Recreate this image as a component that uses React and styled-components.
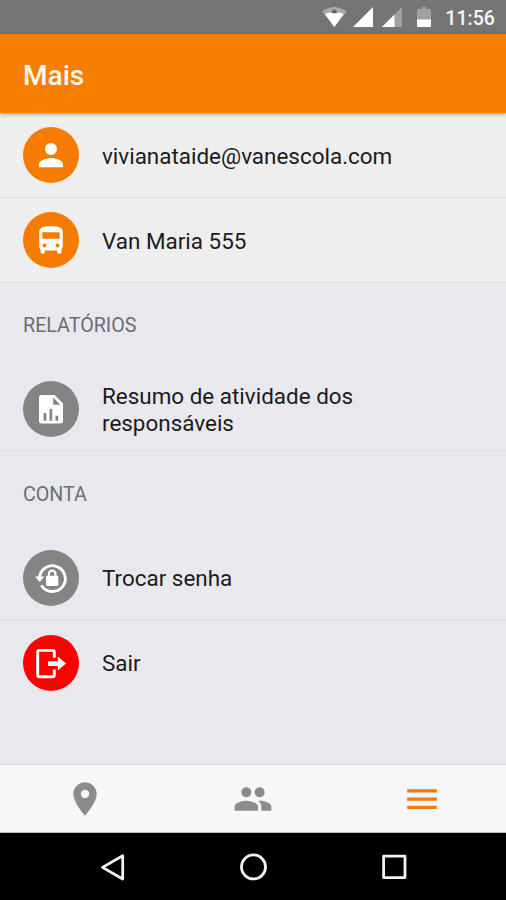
import React from 'react';
import styled, { createGlobalStyle } from 'styled-components';

const GlobalStyle = createGlobalStyle`
  * { box-sizing: border-box; }
  body { margin: 0; }
`;

const Screen = styled.div`
  width: 506px;
  height: 900px;
  overflow: hidden;
  display: flex;
  flex-direction: column;
  background: #e9e8ee;
  font-family: Roboto, sans-serif;
`;

const StatusBar = styled.header`
  height: 34px;
  flex: none;
  padding: 0 11px 0 0;
  display: flex;
  align-items: center;
  justify-content: flex-end;
  background: #757575;
`;

const StatusIcons = styled.svg`
  width: 112px;
  height: 22px;
  margin-right: 11px;
`;

const Clock = styled.span`
  color: #f7f7f7;
  font-size: 19.6px;
  font-weight: 500;
  line-height: 24px;
  margin-top: 3px;
`;

const AppBar = styled.div`
  height: 78.5px;
  flex: none;
  padding: 5px 23px 0;
  display: flex;
  align-items: center;
  background: #f77f00;
  box-shadow: 0 1px 4px rgba(0, 0, 0, 0.4);
  z-index: 1;
`;

const Title = styled.h1`
  margin: 0;
  color: #fff8f0;
  font-size: 28.1px;
  line-height: 34px;
  font-weight: 500;
`;

const Content = styled.main`
  flex: 1;
  min-height: 0;
  padding-top: 1px;
`;

const Row = styled.div`
  height: 84.5px;
  padding: 0 23px;
  display: flex;
  align-items: center;
  gap: 23px;
  background: ${(p) => (p.$light ? '#eeeeee' : 'transparent')};
  border-bottom: ${(p) => (p.$last ? '0' : '1px')} solid #e0e0e4;
`;

const Badge = styled.span`
  width: 56px;
  height: 56px;
  flex: none;
  border-radius: 50%;
  background: ${(p) => p.$color};

  svg { display: block; width: 56px; height: 56px; }
`;

const Label = styled.span`
  max-width: 300px;
  padding-top: 2px;
  color: #1b1b1e;
  font-size: 22.44px;
  line-height: 26.4px;
`;

const SectionTitle = styled.h2`
  height: 84.4px;
  margin: 0;
  padding: 2px 23px 0;
  display: flex;
  align-items: center;
  color: #6d6d72;
  font-size: 19.7px;
  font-weight: 400;
`;

const TabBar = styled.nav`
  height: 69px;
  flex: none;
  display: grid;
  grid-template-columns: repeat(3, 1fr);
  background: #f7f7f7;
  border-top: 1.4px solid #d6d6da;
  border-bottom: 1px solid #bdbdbd;
`;

const Tab = styled.button`
  border: 0;
  padding: 0 0 0 1px;
  background: none;
  display: flex;
  align-items: center;
  justify-content: center;
  color: ${(p) => (p.$active ? '#ef7915' : '#8c8c8c')};

  svg { display: block; width: 40px; height: 40px; }
`;

const SystemBar = styled.nav`
  height: 67px;
  flex: none;
  display: flex;
  justify-content: center;
  background: #000;
`;

const SystemButton = styled.button`
  width: 140.6px;
  border: 0;
  padding: 0;
  background: none;
  display: flex;
  align-items: center;
  justify-content: center;

  svg { display: block; width: 32px; height: 32px; }
`;

const PersonIcon = () => (
  <svg viewBox="0 0 56 56" fill="#fff">
    <circle cx="28" cy="22.1" r="6" />
    <path d="M16 40.3v-3.2c0-4.100 8-6.200 12-6.200s12 2.100 12 6.200v3.200z" />
  </svg>
);

const BusIcon = () => (
  <svg viewBox="0 0 56 56" fill="#fff">
    <path fillRule="evenodd" d="M16.2 20c0-5 4.800-5.700 11.800-5.700s11.800.7 11.800 5.700v14c0 1.300-.5 2.500-1.400 3.300v3c0 .8-.6 1.400-1.400 1.400h-1.300c-.8 0-1.400-.6-1.400-1.400v-1.700H21.700v1.700c0 .8-.6 1.400-1.400 1.400H19c-.8 0-1.400-.6-1.400-1.400v-3c-.9-.8-1.400-2-1.400-3.300zM19.300 20.300v6.400h17.400v-6.400zM21.500 31.500a2 2 0 1 0 0 4 2 2 0 0 0 0-4zM34.500 31.500a2 2 0 1 0 0 4 2 2 0 0 0 0-4z" />
  </svg>
);

const ReportIcon = () => (
  <svg viewBox="0 0 56 56">
    <path fill="#fff" d="M18.500 14h13.200L40 22.500v17.400a2.500 2.500 0 0 1-2.500 2.500h-19a2.500 2.500 0 0 1-2.500-2.500V16.500a2.500 2.500 0 0 1 2.500-2.500z" />
    <path fill="#848484" d="M30.200 16.500v7.200h7.100zM20.600 32h2.700v7.700h-2.700zM26.500 28h2.700v11.700h-2.700zM32.500 34.700h2.700v5h-2.700z" />
  </svg>
);

const PasswordIcon = () => (
  <svg viewBox="0 0 56 56">
    <path fill="none" stroke="#fff" strokeWidth="2.900" d="M16.500 28.500A12.900 12.900 0 1 1 18.300 35.200" />
    <path fill="#fff" d="M12 26.400h9.400l-4.700 5.600z" />
    <path fill="none" stroke="#fff" strokeWidth="2.100" d="M25.900 26.500v-2.600a3.300 3.300 0 0 1 6.600 0v2.600" />
    <rect x="23" y="25.700" width="12.300" height="10.200" rx="1.300" fill="#fff" />
  </svg>
);

const ExitIcon = () => (
  <svg viewBox="0 0 56 56">
    <path fill="none" stroke="#fff" strokeWidth="2.900" strokeLinejoin="round" d="M31.300 22.700V17.200a1.800 1.800 0 0 0-1.800-1.800H16.500a1.800 1.800 0 0 0-1.800 1.800v22.700a1.800 1.800 0 0 0 1.800 1.800h13a1.800 1.800 0 0 0 1.800-1.800v-5.500" />
    <path fill="#fff" d="M25 26.200h9.800v-4.600l8.300 7-8.300 7v-4.600H25z" />
  </svg>
);

const PinIcon = () => (
  <svg viewBox="0 0 24 24" fill="currentColor">
    <path d="M12 2C8.130 2 5 5.130 5 9c0 5.250 7 13 7 13s7-7.750 7-13c0-3.870-3.130-7-7-7zm0 9.500a2.500 2.500 0 0 1 0-5 2.500 2.500 0 0 1 0 5z" />
  </svg>
);

const PeopleIcon = () => (
  <svg viewBox="0 0 24 24" fill="currentColor">
    <path d="M16 11c1.660 0 2.990-1.340 2.990-3S17.660 5 16 5s-3 1.340-3 3 1.340 3 3 3zm-8 0c1.660 0 2.990-1.340 2.990-3S9.660 5 8 5 5 6.340 5 8s1.340 3 3 3zm0 2c-2.330 0-7 1.170-7 3.500V19h14v-2.500c0-2.330-4.670-3.500-7-3.500zm8 0c-.29 0-.62.02-.97.05 1.160.84 1.970 1.970 1.970 3.450V19h6v-2.500c0-2.330-4.670-3.500-7-3.500z" />
  </svg>
);

const MenuIcon = () => (
  <svg viewBox="0 0 40 40" fill="currentColor">
    <path d="M5.200 10.200h29.600v3.200H5.200zM5.200 18.500h29.600v3.200H5.200zM5.200 26.800h29.600V30H5.200z" />
  </svg>
);

const accountRows = [
  { text: 'vivianataide@vanescola.com', Icon: PersonIcon },
  { text: 'Van Maria 555', Icon: BusIcon },
];

export default function App() {
  return (
    <Screen>
      <GlobalStyle />
      <StatusBar>
        <StatusIcons viewBox="0 0 112 22">
          <path fill="#a8a8a8" d="M0 5.500Q12.300-3.500 24.600 5.500L12.300 21z" />
          <path fill="#fff" d="M3.200 8.200Q5.500 6.500 8.200 6.500h1.700Q12.300 7.700 14.800 6.500h1.700Q19.200 6.500 21.500 8.200L12.300 21z" />
          <path fill="#5c5c5c" d="M9.200 6.500L12.300 3l3.200 3.500q-3.200 1.700-6.300 0z" />
          <path fill="#fff" d="M51 1v20H31z" />
          <path fill="#a0a0a0" d="M80 1v20H60z" />
          <path fill="#fff" d="M72.500 8.500V21H60z" />
          <path fill="#a0a0a0" d="M99.500 1h5v2h4.500v11H95V3h4.500z" />
          <path fill="#fff" d="M95 13.500h14V20q0 1-1 1H96q-1 0-1-1z" />
        </StatusIcons>
        <Clock>11:56</Clock>
      </StatusBar>
      <AppBar>
        <Title>Mais</Title>
      </AppBar>
      <Content>
        {accountRows.map(({ text, Icon }) => (
          <Row key={text} $light>
            <Badge $color="#f57c00"><Icon /></Badge>
            <Label>{text}</Label>
          </Row>
        ))}
        <SectionTitle>RELATÓRIOS</SectionTitle>
        <Row>
          <Badge $color="#848484"><ReportIcon /></Badge>
          <Label>Resumo de atividade dos responsáveis</Label>
        </Row>
        <SectionTitle>CONTA</SectionTitle>
        <Row>
          <Badge $color="#848484"><PasswordIcon /></Badge>
          <Label>Trocar senha</Label>
        </Row>
        <Row $last>
          <Badge $color="#ff0000"><ExitIcon /></Badge>
          <Label>Sair</Label>
        </Row>
      </Content>
      <TabBar>
        <Tab aria-label="Mapa"><PinIcon /></Tab>
        <Tab aria-label="Pessoas"><PeopleIcon /></Tab>
        <Tab aria-label="Mais" $active><MenuIcon /></Tab>
      </TabBar>
      <SystemBar>
        <SystemButton aria-label="Voltar">
          <svg viewBox="0 0 32 32" fill="none" stroke="#f2f2f2" strokeWidth="2.800" strokeLinejoin="round">
            <path d="M6.500 16.400L26.700 4.800v23.200z" />
          </svg>
        </SystemButton>
        <SystemButton aria-label="Início">
          <svg viewBox="0 0 32 32" fill="none" stroke="#f2f2f2" strokeWidth="2.800">
            <circle cx="16.500" cy="15.900" r="12" />
          </svg>
        </SystemButton>
        <SystemButton aria-label="Recentes">
          <svg viewBox="0 0 32 32" fill="none" stroke="#f2f2f2" strokeWidth="2.800" strokeLinejoin="round">
            <rect x="5.600" y="5.200" width="21.400" height="21.400" />
          </svg>
        </SystemButton>
      </SystemBar>
    </Screen>
  );
}
